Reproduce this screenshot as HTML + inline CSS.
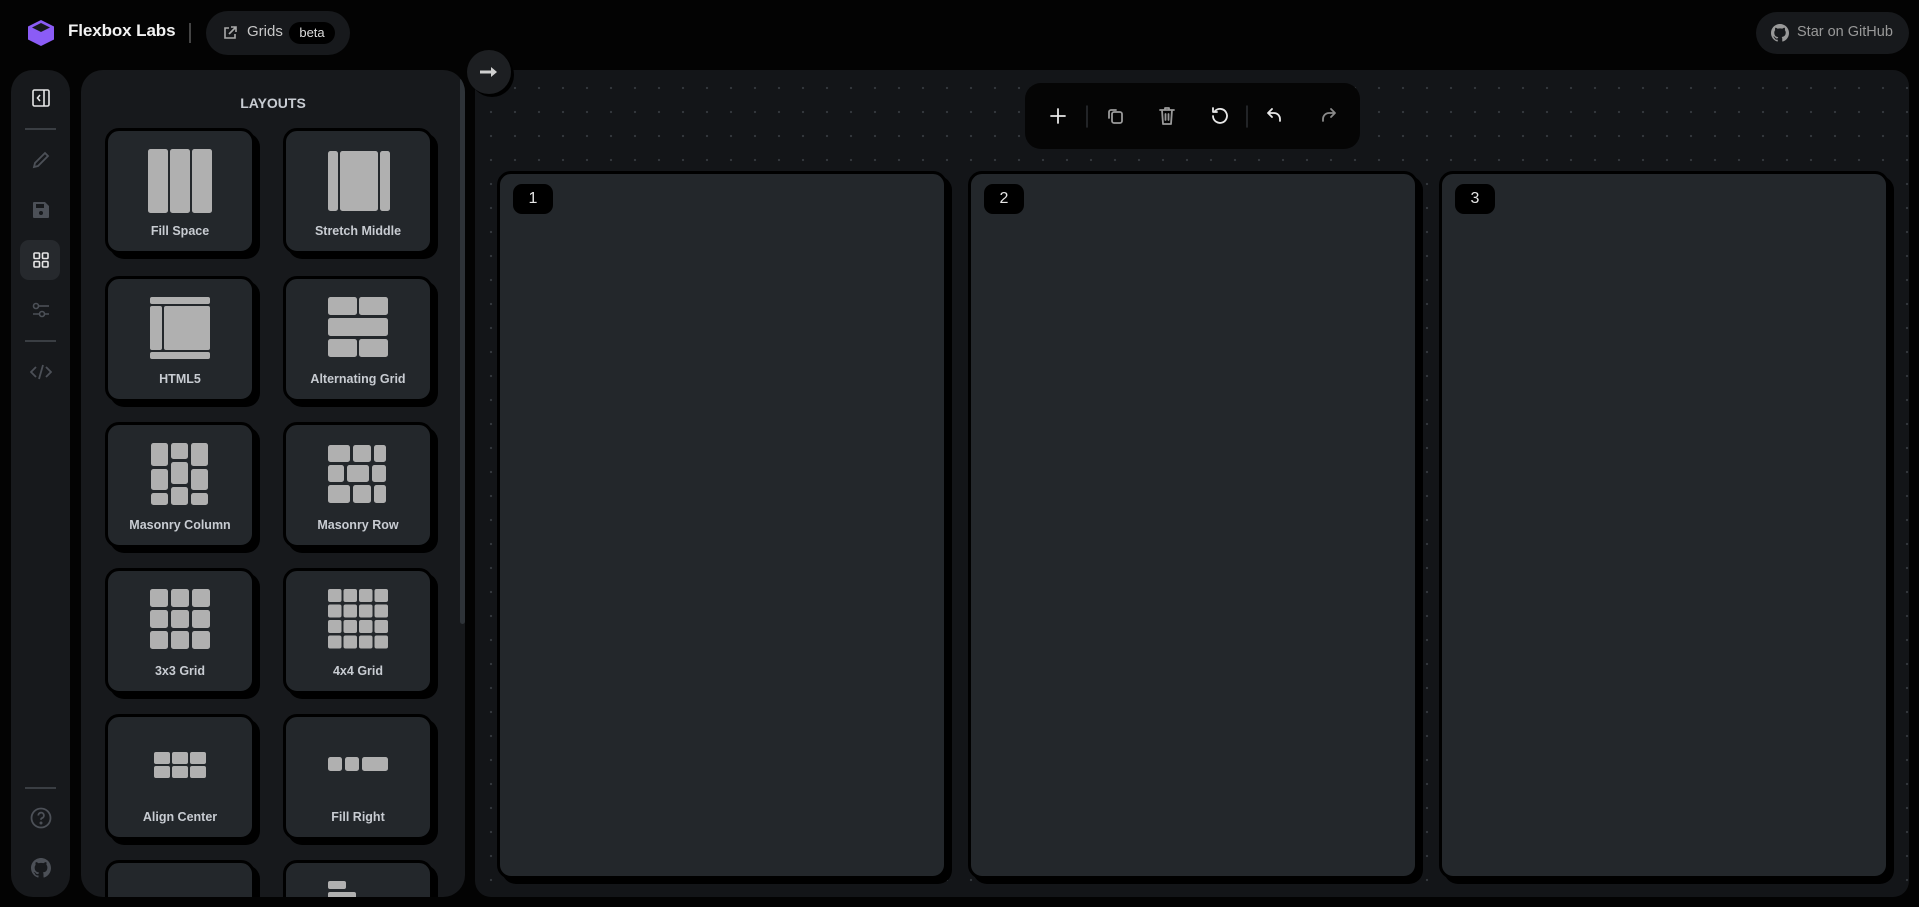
<!DOCTYPE html>
<html style="width:1919px;height:907px;overflow:hidden"><head><meta charset="utf-8">
<style>
*{box-sizing:border-box;margin:0;padding:0}
body{width:1919px;height:907px;background:#030303;font-family:"Liberation Sans",sans-serif;position:relative;overflow:hidden;color:#ddd}
.abs{position:absolute}
.bar{left:11px;top:70px;width:59px;height:827px;background:#17191c;border-radius:22px}
.ico{position:absolute;left:50%;transform:translate(-50%,-50%)}
.sep{position:absolute;left:14px;width:31px;height:2px;background:#3a3e43}
.panel{left:81px;top:70px;width:384px;height:827px;background:#17191c;border-radius:22px;overflow:hidden}
.lc{position:absolute;width:150px;height:126px;background:#23272b;border:3px solid #000;border-radius:14px;box-shadow:5px 5px 0 #000}
.lc svg{position:absolute;left:50%;top:18px;transform:translateX(-50%)}
.lc span{position:absolute;left:0;right:0;top:93px;text-align:center;font-size:12.5px;font-weight:bold;color:#c8ccd2}
.canvas{left:475px;top:70px;width:1434px;height:827px;border-radius:16px;background-color:#131518;background-image:radial-gradient(circle,#34383d 1px,transparent 1.3px);background-size:24px 24px;background-position:4px 6px;overflow:hidden}
.card{position:absolute;top:101px;width:450px;height:708px;background:#23272b;border:3px solid #000;border-radius:14px;box-shadow:5px 5px 0 #000}
.num{position:absolute;left:13px;top:10px;width:40px;height:30px;background:#000;border-radius:9px;color:#e6e6e6;font-size:16px;text-align:center;line-height:30px}
</style></head><body>
<svg class="abs" style="left:27px;top:20px" width="28" height="26" viewBox="0 0 28 26"><path d="M14 0 27 6.5V19.5L14 26 1 19.5V6.5Z" fill="#8b5cf6"/><path d="M14 3 23 7.5 14 12 5 7.5Z" fill="#17191c"/></svg>
<div class="abs" style="left:68px;top:21px;font-size:17px;font-weight:bold;color:#f2f2f2;letter-spacing:-0.1px">Flexbox Labs</div>
<div class="abs" style="left:189px;top:23px;width:2px;height:20px;background:#444"></div>
<div class="abs" style="left:206px;top:11px;width:144px;height:44px;background:#17191c;border-radius:22px"></div>
<svg class="abs" style="left:222px;top:25px" width="16" height="16" viewBox="0 0 16 16" fill="none" stroke="#aaa" stroke-width="1.6"><path d="M7 3H3v10h10V9M9 2h5v5M14 2 7 9"/></svg>
<div class="abs" style="left:247px;top:23px;font-size:15px;color:#c8c8c8">Grids</div>
<div class="abs" style="left:289px;top:22px;width:46px;height:22px;background:#000;border-radius:11px;font-size:13px;color:#ddd;text-align:center;line-height:22px">beta</div>
<div class="abs" style="left:1756px;top:12px;width:153px;height:42px;background:#17191c;border-radius:21px"></div>
<svg class="abs" style="left:1771px;top:24px" width="18" height="18" viewBox="0 0 16 16"><path fill="#999" d="M8 0C3.58 0 0 3.58 0 8c0 3.54 2.29 6.53 5.47 7.59.4.07.55-.17.55-.38v-1.33c-2.23.48-2.7-1.07-2.7-1.07-.36-.92-.89-1.17-.89-1.17-.73-.5.05-.49.05-.49.8.06 1.23.83 1.23.83.72 1.23 1.88.87 2.33.67.07-.52.28-.87.51-1.07-1.78-.2-3.64-.89-3.64-3.96 0-.87.31-1.59.82-2.15-.08-.2-.36-1.02.08-2.12 0 0 .67-.21 2.2.82A7.6 7.6 0 0 1 8 3.86c.68 0 1.36.09 2 .27 1.53-1.04 2.2-.82 2.2-.82.44 1.1.16 1.92.08 2.12.51.56.82 1.27.82 2.15 0 3.07-1.87 3.75-3.65 3.95.29.25.54.73.54 1.48v2.2c0 .21.15.46.55.38A8 8 0 0 0 16 8c0-4.42-3.58-8-8-8z"/></svg>
<div class="abs" style="left:1797px;top:24px;font-size:14.5px;color:#999">Star on GitHub</div>

<div class="abs bar">
  <svg class="ico" style="top:28px" width="18" height="18" viewBox="0 0 18 18" fill="none" stroke="#e6e6e6" stroke-width="1.6"><rect x="1" y="1" width="16" height="16" rx="1.5"/><path d="M12 1v16M8 6 5.5 9 8 12"/></svg>
  <div class="sep" style="top:58px"></div>
  <svg class="ico" style="top:90px" width="18" height="18" viewBox="0 0 18 18" fill="none" stroke="#4c5057" stroke-width="1.8"><path d="M2 16l1-4L13 2l3 3L6 15Z"/></svg>
  <svg class="ico" style="top:140px" width="18" height="18" viewBox="0 0 18 18"><path fill="#4c5057" d="M2 1h11l4 4v11a1 1 0 0 1-1 1H2a1 1 0 0 1-1-1V2a1 1 0 0 1 1-1z"/><rect x="4" y="3" width="8" height="4" fill="#17191c"/><circle cx="9" cy="12" r="2" fill="#17191c"/></svg>
  <div style="position:absolute;left:9px;top:170px;width:40px;height:40px;background:#26292d;border-radius:9px"></div>
  <svg class="ico" style="top:190px" width="16" height="16" viewBox="0 0 16 16" fill="none" stroke="#e6e6e6" stroke-width="1.6"><rect x="1" y="1" width="5.5" height="5.5" rx="1"/><rect x="9.5" y="1" width="5.5" height="5.5" rx="1"/><rect x="1" y="9.5" width="5.5" height="5.5" rx="1"/><rect x="9.5" y="9.5" width="5.5" height="5.5" rx="1"/></svg>
  <svg class="ico" style="top:240px" width="18" height="16" viewBox="0 0 18 16" fill="none" stroke="#4c5057" stroke-width="1.6"><circle cx="4" cy="4" r="2.5"/><path d="M6.5 4H17"/><circle cx="10" cy="12" r="2.5"/><path d="M1 12h6.5M12.5 12H17"/></svg>
  <div class="sep" style="top:270px"></div>
  <svg class="ico" style="top:302px" width="22" height="16" viewBox="0 0 22 16" fill="none" stroke="#4c5057" stroke-width="1.8"><path d="M6 3 1 8l5 5M16 3l5 5-5 5M13 1 9 15"/></svg>
  <div class="sep" style="top:717px"></div>
  <svg class="ico" style="top:748px" width="22" height="22" viewBox="0 0 22 22" fill="none" stroke="#4c5057" stroke-width="1.8"><circle cx="11" cy="11" r="9.5"/><path d="M8.3 8.5a2.8 2.8 0 1 1 3.7 2.6c-.7.3-1 .8-1 1.6"/><circle cx="11" cy="16" r=".6" fill="#4c5057"/></svg>
  <svg class="ico" style="top:798px" width="20" height="20" viewBox="0 0 16 16"><path fill="#4c5057" d="M8 0C3.58 0 0 3.58 0 8c0 3.54 2.29 6.53 5.47 7.59.4.07.55-.17.55-.38v-1.33c-2.23.48-2.7-1.07-2.7-1.07-.36-.92-.89-1.17-.89-1.17-.73-.5.05-.49.05-.49.8.06 1.23.83 1.23.83.72 1.23 1.88.87 2.33.67.07-.52.28-.87.51-1.07-1.78-.2-3.64-.89-3.64-3.96 0-.87.31-1.59.82-2.15-.08-.2-.36-1.02.08-2.12 0 0 .67-.21 2.2.82A7.6 7.6 0 0 1 8 3.86c.68 0 1.36.09 2 .27 1.53-1.04 2.2-.82 2.2-.82.44 1.1.16 1.92.08 2.12.51.56.82 1.27.82 2.15 0 3.07-1.87 3.75-3.65 3.95.29.25.54.73.54 1.48v2.2c0 .21.15.46.55.38A8 8 0 0 0 16 8c0-4.42-3.58-8-8-8z"/></svg>
</div>

<div class="abs panel">
  <div style="position:absolute;left:0;right:0;top:25px;text-align:center;font-size:14px;font-weight:bold;color:#c8ccd2">LAYOUTS</div>
  <div style="position:absolute;left:379px;top:8px;width:5px;height:546px;background:#2e3338;border-radius:3px"></div>
  <div class="lc" style="left:24px;top:58px"><svg width="64" height="64" viewBox="0 0 64 64" fill="#b0b0b0"><rect x="0" y="0" width="20" height="64" rx="2.5"/><rect x="22" y="0" width="20" height="64" rx="2.5"/><rect x="44" y="0" width="20" height="64" rx="2.5"/></svg><span>Fill Space</span></div>
  <div class="lc" style="left:202px;top:58px"><svg width="64" height="64" viewBox="0 0 64 64" fill="#b0b0b0"><rect x="2" y="2" width="10" height="60" rx="2.5"/><rect x="14" y="2" width="38" height="60" rx="2.5"/><rect x="54" y="2" width="10" height="60" rx="2.5"/></svg><span>Stretch Middle</span></div>
  <div class="lc" style="left:24px;top:206px"><svg width="64" height="64" viewBox="0 0 64 64" fill="#b0b0b0"><rect x="2" y="0" width="60" height="7" rx="2"/><rect x="2" y="9" width="12" height="44" rx="2"/><rect x="16" y="9" width="46" height="44" rx="2"/><rect x="2" y="55" width="60" height="7" rx="2"/></svg><span>HTML5</span></div>
  <div class="lc" style="left:202px;top:206px"><svg width="64" height="64" viewBox="0 0 64 64" fill="#b0b0b0"><rect x="2" y="0" width="29" height="18" rx="2.5"/><rect x="33" y="0" width="29" height="18" rx="2.5"/><rect x="2" y="21" width="60" height="18" rx="2.5"/><rect x="2" y="42" width="29" height="18" rx="2.5"/><rect x="33" y="42" width="29" height="18" rx="2.5"/></svg><span>Alternating Grid</span></div>
  <div class="lc" style="left:24px;top:352px"><svg width="64" height="64" viewBox="0 0 64 64" fill="#b0b0b0"><rect x="3" y="0" width="17" height="23" rx="2.5"/><rect x="23" y="0" width="17" height="16" rx="2.5"/><rect x="43" y="0" width="17" height="23" rx="2.5"/><rect x="3" y="26" width="17" height="21" rx="2.5"/><rect x="23" y="19" width="17" height="22" rx="2.5"/><rect x="43" y="26" width="17" height="21" rx="2.5"/><rect x="3" y="50" width="17" height="12" rx="2.5"/><rect x="23" y="44" width="17" height="18" rx="2.5"/><rect x="43" y="50" width="17" height="12" rx="2.5"/></svg><span>Masonry Column</span></div>
  <div class="lc" style="left:202px;top:352px"><svg width="64" height="64" viewBox="0 0 64 64" fill="#b0b0b0"><rect x="2" y="2" width="22" height="17" rx="2.5"/><rect x="27" y="2" width="18" height="17" rx="2.5"/><rect x="48" y="2" width="12" height="17" rx="2.5"/><rect x="2" y="22" width="16" height="17" rx="2.5"/><rect x="21" y="22" width="22" height="17" rx="2.5"/><rect x="46" y="22" width="14" height="17" rx="2.5"/><rect x="2" y="42" width="22" height="18" rx="2.5"/><rect x="27" y="42" width="18" height="18" rx="2.5"/><rect x="48" y="42" width="12" height="18" rx="2.5"/></svg><span>Masonry Row</span></div>
  <div class="lc" style="left:24px;top:498px"><svg width="64" height="64" viewBox="0 0 64 64" fill="#b0b0b0"><rect x="2" y="0" width="18" height="18" rx="2.5"/><rect x="23" y="0" width="18" height="18" rx="2.5"/><rect x="44" y="0" width="18" height="18" rx="2.5"/><rect x="2" y="21" width="18" height="18" rx="2.5"/><rect x="23" y="21" width="18" height="18" rx="2.5"/><rect x="44" y="21" width="18" height="18" rx="2.5"/><rect x="2" y="42" width="18" height="18" rx="2.5"/><rect x="23" y="42" width="18" height="18" rx="2.5"/><rect x="44" y="42" width="18" height="18" rx="2.5"/></svg><span>3x3 Grid</span></div>
  <div class="lc" style="left:202px;top:498px"><svg width="64" height="64" viewBox="0 0 64 64" fill="#b0b0b0"><g id="r4"><rect x="2" y="0" width="13.5" height="13" rx="2"/><rect x="17.5" y="0" width="13.5" height="13" rx="2"/><rect x="33" y="0" width="13.5" height="13" rx="2"/><rect x="48.5" y="0" width="13.5" height="13" rx="2"/></g><use href="#r4" y="15.5"/><use href="#r4" y="31"/><use href="#r4" y="46.5"/></svg><span>4x4 Grid</span></div>
  <div class="lc" style="left:24px;top:644px"><svg width="64" height="64" viewBox="0 0 64 64" fill="#b0b0b0"><rect x="6" y="17" width="16" height="12" rx="2"/><rect x="24" y="17" width="16" height="12" rx="2"/><rect x="42" y="17" width="16" height="12" rx="2"/><rect x="6" y="31" width="16" height="12" rx="2"/><rect x="24" y="31" width="16" height="12" rx="2"/><rect x="42" y="31" width="16" height="12" rx="2"/></svg><span>Align Center</span></div>
  <div class="lc" style="left:202px;top:644px"><svg width="64" height="64" viewBox="0 0 64 64" fill="#b0b0b0"><rect x="2" y="22" width="14" height="14" rx="2.5"/><rect x="19" y="22" width="14" height="14" rx="2.5"/><rect x="36" y="22" width="26" height="14" rx="2.5"/></svg><span>Fill Right</span></div>
  <div class="lc" style="left:24px;top:790px"></div>
  <div class="lc" style="left:202px;top:790px"><svg width="64" height="64" viewBox="0 0 64 64" fill="#b0b0b0"><rect x="2" y="0" width="18" height="8" rx="2"/><rect x="2" y="11" width="28" height="8" rx="2"/></svg></div>
</div>

<div class="abs canvas">
  <div style="position:absolute;left:550px;top:13px;width:335px;height:66px;background:#050505;border-radius:16px"></div>
  <div class="card" style="left:22px"><div class="num">1</div></div>
  <div class="card" style="left:493px"><div class="num">2</div></div>
  <div class="card" style="left:964px"><div class="num">3</div></div>
</div>
<svg class="abs" style="left:1025px;top:83px" width="335" height="66" viewBox="0 0 335 66" fill="none" stroke-linecap="round" stroke-linejoin="round" stroke-width="1.8">
  <path d="M33 26v14M26 33h14" stroke="#e8e8e8"/>
  <path d="M62 23v21M222 23v21" stroke="#2c2f33" stroke-width="1.5"/>
  <g stroke="#9a9a9a"><rect x="87" y="29" width="10" height="11" rx="2"/><path d="M84 35v-6a2 2 0 0 1 2-2h5"/></g>
  <g stroke="#9a9a9a"><path d="M135 27h14M140 27v-2h4v2M137 27l1 14h8l1-14M140.5 31v6M143.5 31v6"/></g>
  <path d="M188 33a7 7 0 1 0 2-5M188 25v4h4" stroke="#e8e8e8"/>
  <path d="M243 30h6a6 6 0 0 1 6 6v2M243 30l4-4M243 30l4 4" stroke="#e8e8e8"/>
  <path d="M310 30h-6a6 6 0 0 0-6 6v2M310 30l-4-4M310 30l-4 4" stroke="#8a8a8a"/>
</svg>
<div class="abs" style="left:467px;top:50px;width:44px;height:44px;border-radius:50%;background:#1d1f22;box-shadow:3px 3px 0 #000"></div>
<svg class="abs" style="left:479px;top:64px" width="20" height="16" viewBox="0 0 20 16"><path d="M1 8h14" stroke="#d0d0d0" stroke-width="3"/><path d="M12 3l6 5-6 5Z" fill="#d0d0d0"/></svg>
</body></html>
